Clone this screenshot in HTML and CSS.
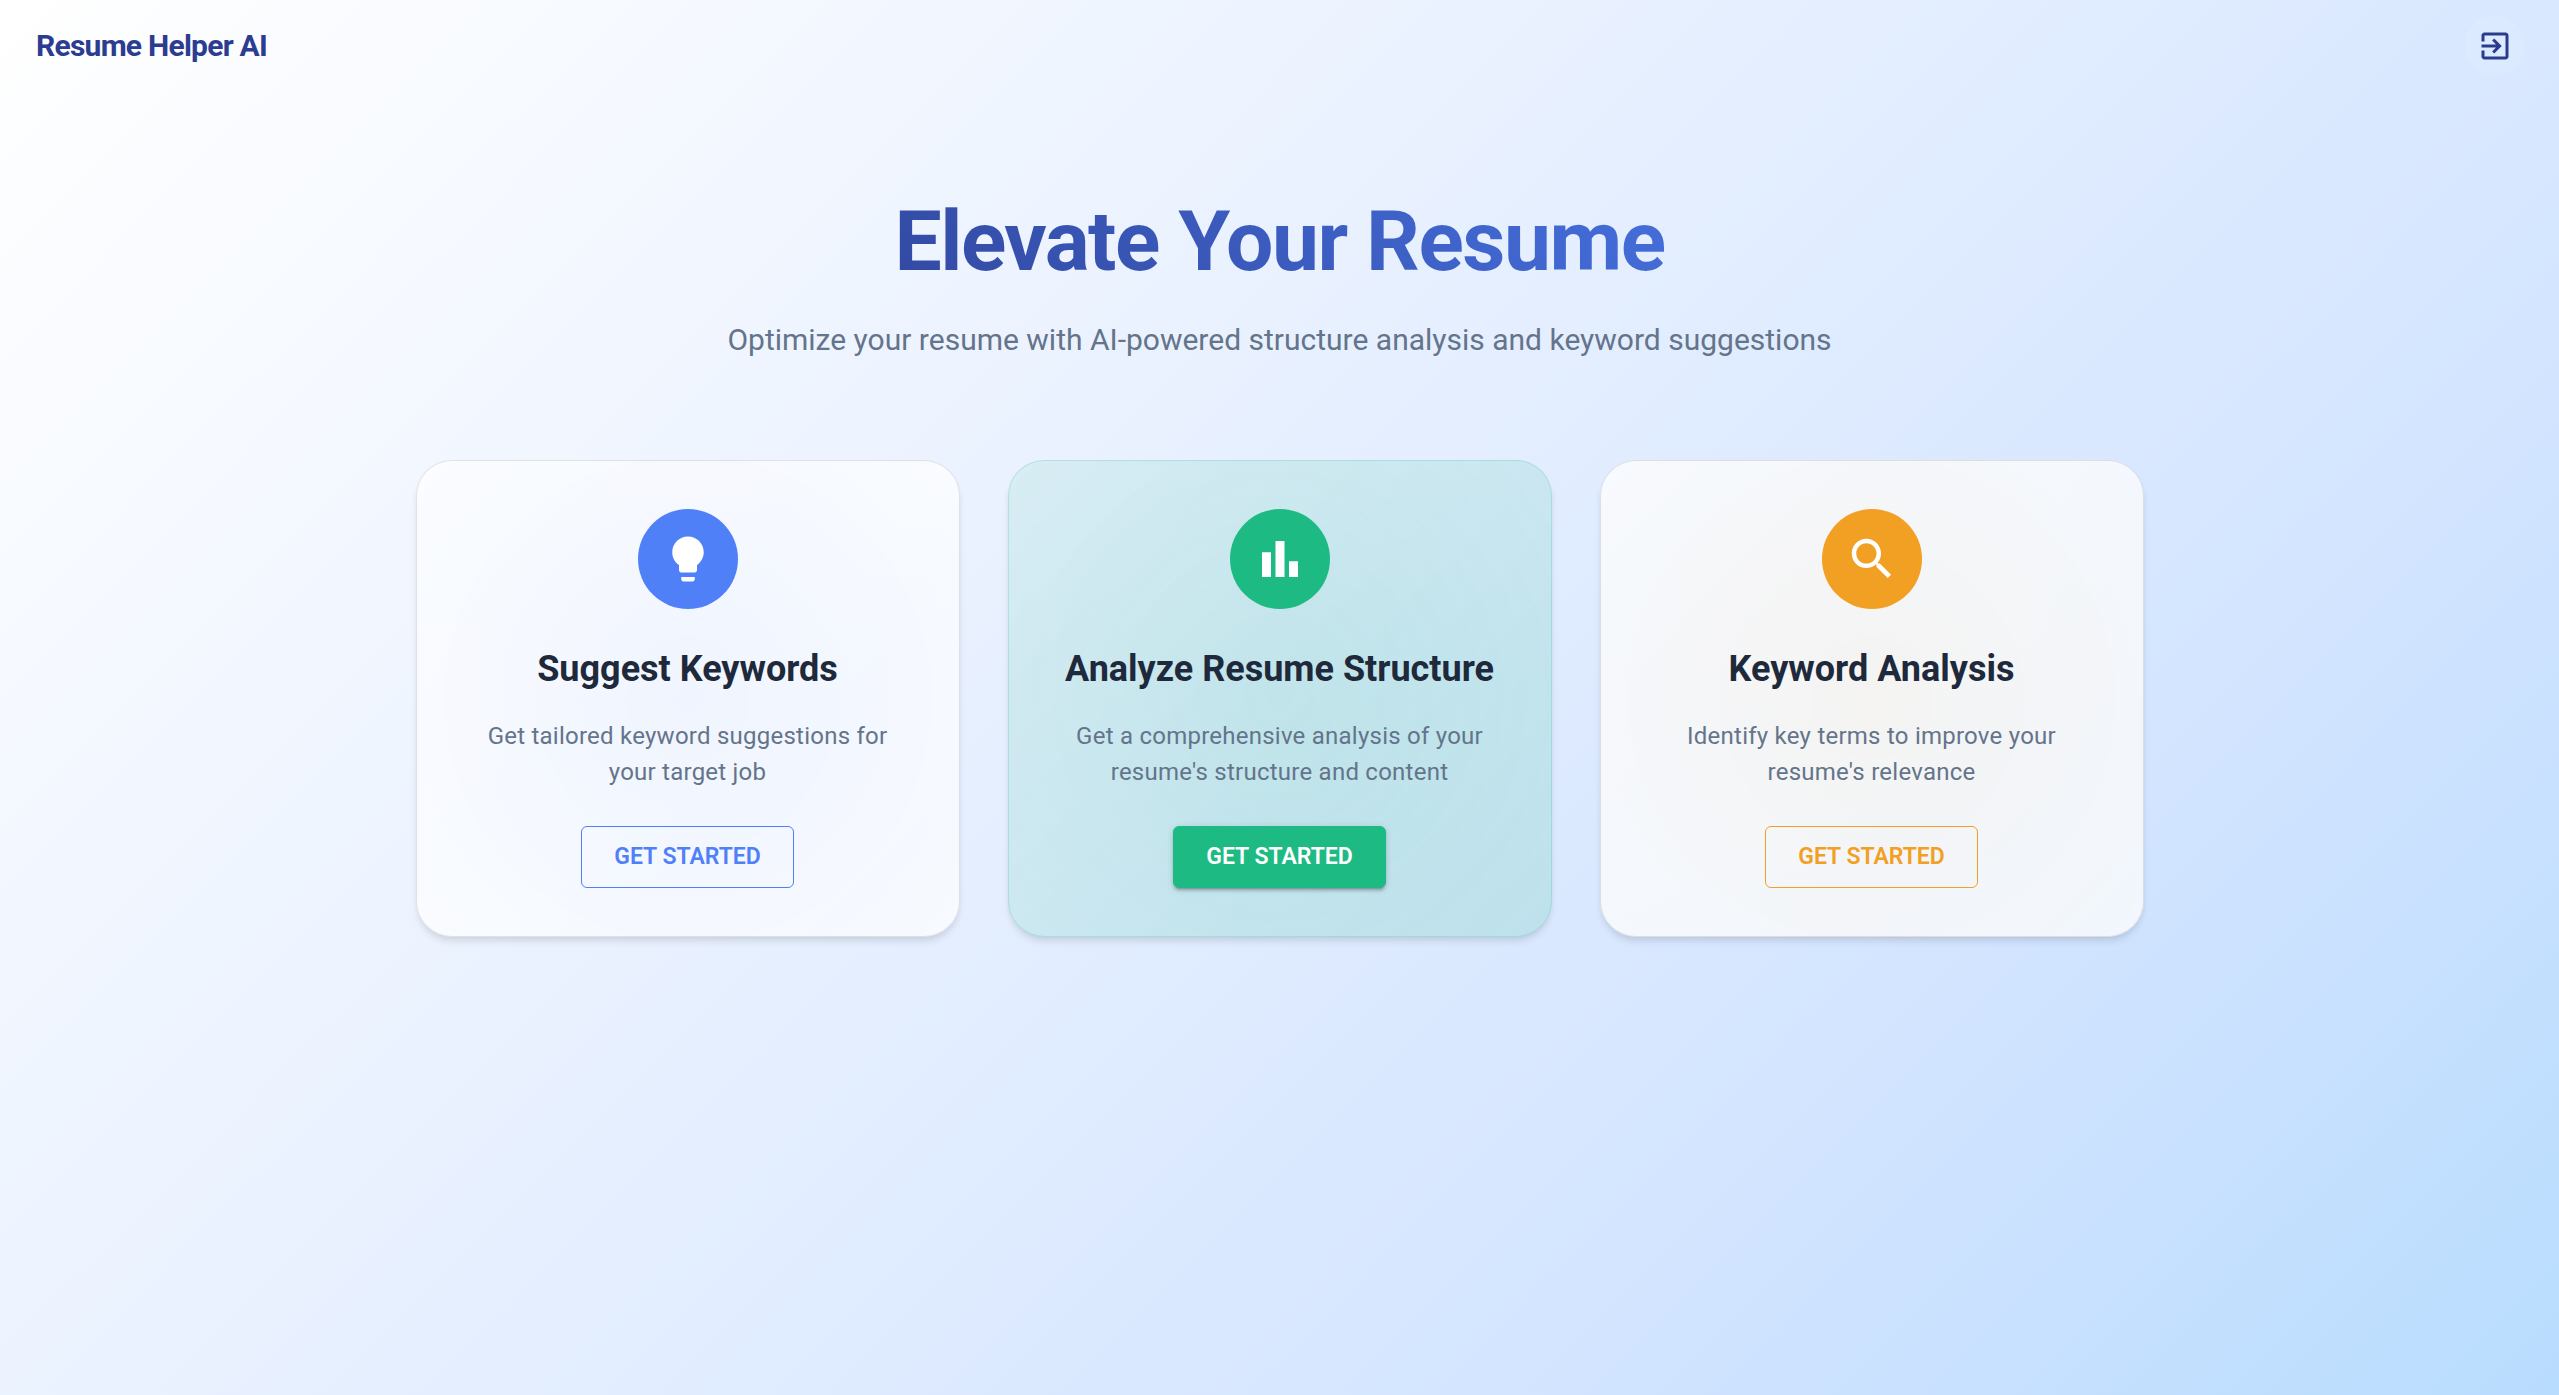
FILE: index.html
```html
<!DOCTYPE html>
<html lang="en">
<head>
  <meta charset="utf-8">
  <meta name="viewport" content="width=device-width, initial-scale=1">
  <title>Resume Helper AI</title>
  <link rel="stylesheet" href="styles.css">
</head>
<body>
  <header class="topbar">
    <a class="brand" href="#">Resume Helper AI</a>
    <button class="icon-button" type="button" aria-label="Log out">
      <svg viewBox="0 0 24 24" aria-hidden="true"><path d="M10.09 15.59 11.5 17l5-5-5-5-1.41 1.41L12.67 11H3v2h9.67zM19 3H5c-1.11 0-2 .9-2 2v4h2V5h14v14H5v-4H3v4c0 1.1.89 2 2 2h14c1.1 0 2-.9 2-2V5c0-1.1-.9-2-2-2"/></svg>
    </button>
  </header>

  <main class="page">
    <h1 class="headline">Elevate Your Resume</h1>
    <p class="tagline">Optimize your resume with AI-powered structure analysis and keyword suggestions</p>

    <section class="cards">
      <article class="card card-blue">
        <span class="badge">
          <svg viewBox="0 0 24 24" aria-hidden="true"><path d="M9 21c0 .5.4 1 1 1h4c.6 0 1-.5 1-1v-1H9zm3-19C8.1 2 5 5.1 5 9c0 2.4 1.2 4.5 3 5.7V17c0 .5.4 1 1 1h6c.6 0 1-.5 1-1v-2.3c1.8-1.3 3-3.4 3-5.7 0-3.9-3.1-7-7-7"/></svg>
        </span>
        <h2 class="card-title">Suggest Keywords</h2>
        <p class="card-text">Get tailored keyword suggestions for your target job</p>
        <button class="action" type="button">Get Started</button>
      </article>

      <article class="card card-green">
        <span class="badge">
          <svg viewBox="0 0 24 24" aria-hidden="true"><path d="M4 9h4v11H4zm12 4h4v7h-4zm-6-9h4v16h-4z"/></svg>
        </span>
        <h2 class="card-title">Analyze Resume Structure</h2>
        <p class="card-text">Get a comprehensive analysis of your resume's structure and content</p>
        <button class="action action-filled" type="button">Get Started</button>
      </article>

      <article class="card card-amber">
        <span class="badge">
          <svg viewBox="0 0 24 24" aria-hidden="true"><path d="M15.5 14h-.79l-.28-.27C15.41 12.59 16 11.11 16 9.5 16 5.91 13.09 3 9.5 3S3 5.91 3 9.5 5.91 16 9.5 16c1.61 0 3.09-.59 4.23-1.57l.27.28v.79l5 4.99L20.49 19zm-6 0C7.01 14 5 11.99 5 9.5S7.01 5 9.5 5 14 7.01 14 9.5 11.99 14 9.5 14"/></svg>
        </span>
        <h2 class="card-title">Keyword Analysis</h2>
        <p class="card-text">Identify key terms to improve your resume's relevance</p>
        <button class="action" type="button">Get Started</button>
      </article>
    </section>
  </main>
</body>
</html>
```
FILE: styles.css
```css
*,
*::before,
*::after {
  box-sizing: border-box;
}

body {
  margin: 0;
  min-height: 100vh;
  font-family: Roboto, "Liberation Sans", sans-serif;
  color: #1e293b;
  background: linear-gradient(135deg, #ffffff 0%, #e9f1ff 40%, #d2e4ff 75%, #b8dcfe 100%) no-repeat;
}

.topbar {
  display: flex;
  align-items: center;
  justify-content: space-between;
  padding: 16px 34px 16px 36px;
}

.brand {
  font-size: 30px;
  line-height: 48px;
  font-weight: 700;
  letter-spacing: -0.025em;
  color: #2c3c91;
  text-decoration: none;
}

.icon-button {
  display: flex;
  padding: 12px;
  border: 0;
  border-radius: 50%;
  color: #2a3b8f;
  background: rgba(255, 255, 255, 0.1);
  cursor: pointer;
}

.icon-button svg {
  width: 36px;
  height: 36px;
  fill: currentColor;
}

.page {
  max-width: 1800px;
  margin: 0 auto;
  padding: 96px 36px;
  text-align: center;
}

.headline {
  margin: 0 0 20px;
  font-size: 84px;
  line-height: 108px;
  font-weight: 700;
  letter-spacing: -0.018em;
  color: transparent;
  background: linear-gradient(45deg, #283583, #4f83fb);
  background-clip: text;
  -webkit-background-clip: text;
}

.tagline {
  margin: 0 0 96px;
  font-size: 30px;
  line-height: 48px;
  color: #64748b;
}

.cards {
  display: grid;
  grid-template-columns: repeat(auto-fit, minmax(420px, 1fr));
  gap: 48px;
}

.card {
  display: flex;
  flex-direction: column;
  align-items: center;
  padding: 48px;
  border: 1px solid rgba(0, 0, 0, 0.1);
  border-radius: 36px;
  background-image:
    radial-gradient(circle, var(--glow), transparent 105%),
    var(--surface);
  background-origin: border-box;
  box-shadow: 0 6px 9px -2px rgba(0, 0, 0, 0.1), 0 3px 6px -2px rgba(0, 0, 0, 0.06);
}

.card-blue {
  --accent: #4f80f7;
  --glow: rgba(79, 128, 247, 0.06);
  --surface: linear-gradient(rgba(255, 255, 255, 0.72), rgba(255, 255, 255, 0.72));
}

.card-green {
  --accent: #1dba84;
  --glow: rgba(29, 186, 132, 0.07);
  --surface: linear-gradient(135deg, rgba(29, 186, 132, 0.08), rgba(29, 186, 132, 0.14));
  border-color: rgba(29, 186, 132, 0.2);
}

.card-amber {
  --accent: #f2a024;
  --glow: rgba(242, 160, 36, 0.06);
  --surface: linear-gradient(rgba(255, 255, 255, 0.72), rgba(255, 255, 255, 0.72));
}

.badge {
  display: flex;
  padding: 23px;
  border-radius: 50%;
  color: #ffffff;
  background: var(--accent);
}

.badge svg {
  width: 54px;
  height: 54px;
  fill: currentColor;
}

.card-title {
  margin: 36px 0 24px;
  font-size: 36px;
  line-height: 49px;
  font-weight: 700;
}

.card-text {
  margin: 0 0 36px;
  font-size: 24px;
  line-height: 36px;
  letter-spacing: 0.01em;
  color: #64748b;
}

.action {
  padding: 12px 32px;
  border: 1px solid var(--accent);
  border-radius: 6px;
  font-family: inherit;
  font-size: 23px;
  line-height: 36px;
  font-weight: 600;
  text-transform: uppercase;
  color: var(--accent);
  background: transparent;
  cursor: pointer;
}

.action-filled {
  color: #ffffff;
  background: var(--accent);
  box-shadow: 0 4px 2px -3px rgba(0, 0, 0, 0.2), 0 3px 3px rgba(0, 0, 0, 0.14), 0 1px 7px rgba(0, 0, 0, 0.12);
}
```
